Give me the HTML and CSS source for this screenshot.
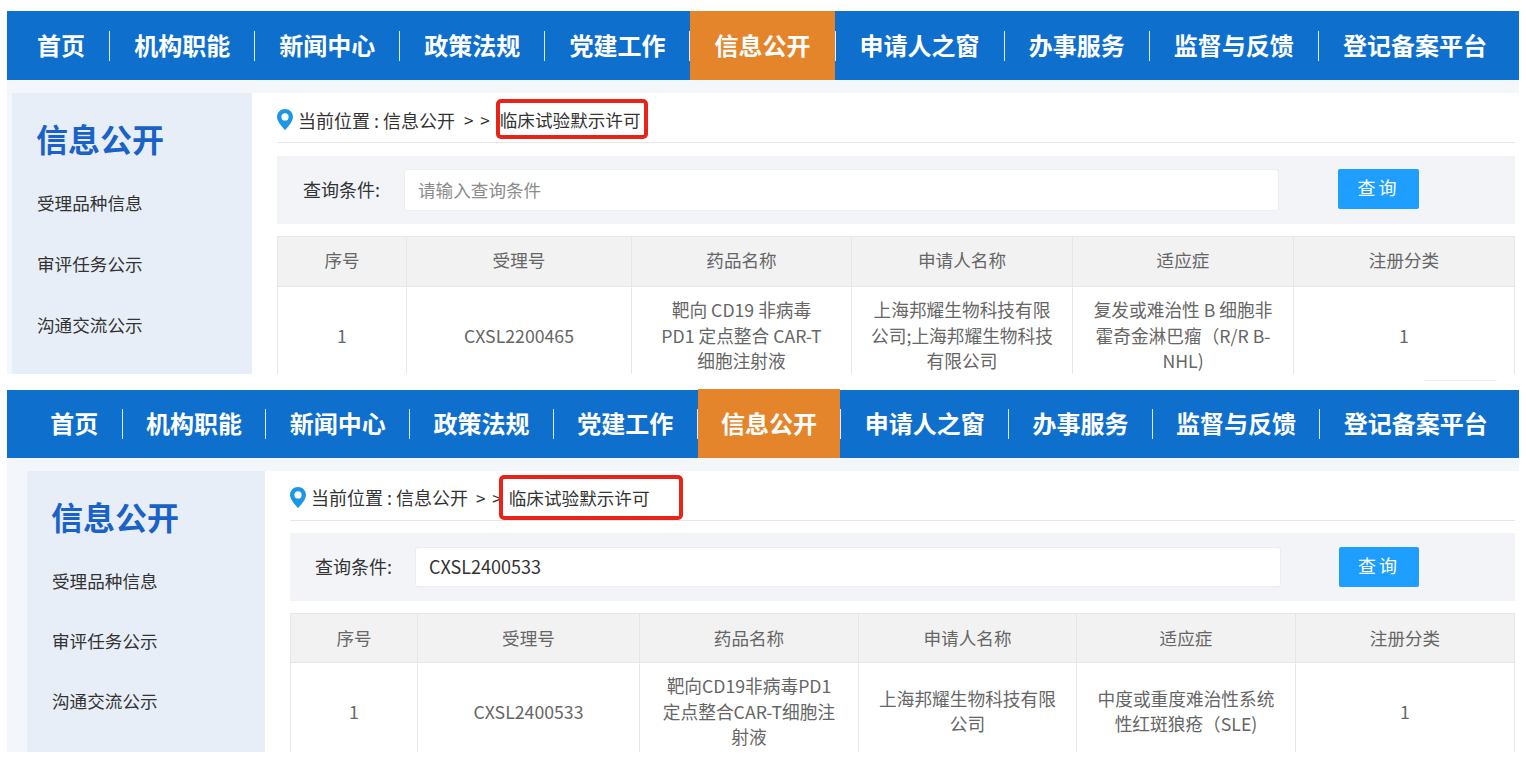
FILE: index.html
```html
<!DOCTYPE html>
<html lang="zh-CN">
<head>
<meta charset="utf-8">
<title>信息公开</title>
<link rel="stylesheet" href="styles.css">
</head>
<body>
<section class="panel panel-a">
  <nav class="nav">
    <a class="nav-item">首页</a><i class="sep"></i>
    <a class="nav-item">机构职能</a><i class="sep"></i>
    <a class="nav-item">新闻中心</a><i class="sep"></i>
    <a class="nav-item">政策法规</a><i class="sep"></i>
    <a class="nav-item">党建工作</a><i class="sep"></i>
    <a class="nav-item active">信息公开</a><i class="sep"></i>
    <a class="nav-item">申请人之窗</a><i class="sep"></i>
    <a class="nav-item">办事服务</a><i class="sep"></i>
    <a class="nav-item">监督与反馈</a><i class="sep"></i>
    <a class="nav-item">登记备案平台</a>
  </nav>
  <div class="content">
    <aside class="side">
      <h2 class="side-title">信息公开</h2>
      <ul class="side-list">
        <li>受理品种信息</li>
        <li>审评任务公示</li>
        <li>沟通交流公示</li>
      </ul>
    </aside>
    <main class="main">
      <div class="crumb">
        <svg class="pin" viewBox="0 0 16 21"><path fill-rule="evenodd" d="M8 0C3.6 0 0 3.5 0 7.9 0 13 8 21 8 21s8-8 8-13.1C16 3.5 12.4 0 8 0zm0 4.3a3.6 3.6 0 1 1 0 7.2 3.6 3.6 0 0 1 0-7.2z"/></svg>
        <span>当前位置 : 信息公开</span><span class="arrows">&gt; &gt;</span><span class="crumb-last">临床试验默示许可</span>
        <div class="mark"></div>
      </div>
      <form class="search">
        <label class="search-label">查询条件:</label>
        <input class="search-input" type="text" placeholder="请输入查询条件">
        <button class="search-btn" type="button">查询</button>
      </form>
      <table class="grid">
        <colgroup><col><col><col><col><col><col></colgroup>
        <thead><tr><th>序号</th><th>受理号</th><th>药品名称</th><th>申请人名称</th><th>适应症</th><th>注册分类</th></tr></thead>
        <tbody><tr><td>1</td><td>CXSL2200465</td><td>靶向 CD19 非病毒<br>PD1 定点整合 CAR-T<br>细胞注射液</td><td>上海邦耀生物科技有限公司;上海邦耀生物科技有限公司</td><td>复发或难治性 B 细胞非霍奇金淋巴瘤（R/R B-NHL)</td><td>1</td></tr></tbody>
      </table>
    </main>
  </div>
</section>
<div class="gap"><span class="gap-line"></span></div>
<section class="panel panel-b">
  <nav class="nav">
    <a class="nav-item">首页</a><i class="sep"></i>
    <a class="nav-item">机构职能</a><i class="sep"></i>
    <a class="nav-item">新闻中心</a><i class="sep"></i>
    <a class="nav-item">政策法规</a><i class="sep"></i>
    <a class="nav-item">党建工作</a><i class="sep"></i>
    <a class="nav-item active">信息公开</a><i class="sep"></i>
    <a class="nav-item">申请人之窗</a><i class="sep"></i>
    <a class="nav-item">办事服务</a><i class="sep"></i>
    <a class="nav-item">监督与反馈</a><i class="sep"></i>
    <a class="nav-item">登记备案平台</a>
  </nav>
  <div class="content">
    <aside class="side">
      <h2 class="side-title">信息公开</h2>
      <ul class="side-list">
        <li>受理品种信息</li>
        <li>审评任务公示</li>
        <li>沟通交流公示</li>
      </ul>
    </aside>
    <main class="main">
      <div class="crumb">
        <svg class="pin" viewBox="0 0 16 21"><path fill-rule="evenodd" d="M8 0C3.6 0 0 3.5 0 7.9 0 13 8 21 8 21s8-8 8-13.1C16 3.5 12.4 0 8 0zm0 4.3a3.6 3.6 0 1 1 0 7.2 3.6 3.6 0 0 1 0-7.2z"/></svg>
        <span>当前位置 : 信息公开</span><span class="arrows">&gt; &gt;</span><span class="crumb-last">临床试验默示许可</span>
        <div class="mark"></div>
      </div>
      <form class="search">
        <label class="search-label">查询条件:</label>
        <input class="search-input" type="text" value="CXSL2400533">
        <button class="search-btn" type="button">查询</button>
      </form>
      <table class="grid">
        <colgroup><col><col><col><col><col><col></colgroup>
        <thead><tr><th>序号</th><th>受理号</th><th>药品名称</th><th>申请人名称</th><th>适应症</th><th>注册分类</th></tr></thead>
        <tbody><tr><td>1</td><td>CXSL2400533</td><td>靶向CD19非病毒PD1<br>定点整合CAR-T细胞注<br>射液</td><td>上海邦耀生物科技有限公司</td><td>中度或重度难治性系统性红斑狼疮（SLE)</td><td>1</td></tr></tbody>
      </table>
    </main>
  </div>
</section>
</body>
</html>
```
FILE: styles.css
```css
* { box-sizing: border-box; }
html, body { margin: 0; padding: 0; }
body {
  background: #fff;
  padding: 11px 7px 0;
  height: 759px;
  overflow: hidden;
  font-family: "Noto Sans CJK SC", "Noto Sans", sans-serif;
  font-size: 18px;
  color: #333;
}
.panel {
  width: 1512px;
  display: flex;
  flex-direction: column;
  background: #f3f7fc;
}
.panel-a { height: 363px; --pad: 24.06px; }
.panel-b { height: 362px; --pad: 23.37px; }

/* nav */
.nav {
  display: flex;
  align-items: center;
  flex: none;
  background: #0f6fcd;
}
.panel-a .nav { height: 69px; padding-left: 6px; margin-bottom: 13px; }
.panel-b .nav { height: 68px; padding-left: 20px; margin-bottom: 13px; }
.nav-item {
  display: flex;
  align-items: center;
  height: 100%;
  padding: 0 var(--pad) 2px;
  font-size: 24px;
  font-weight: 700;
  line-height: 1;
  color: #fff;
  white-space: nowrap;
}
.nav-item.active { background: #e5852b; }
.panel-b .nav-item.active { height: 69px; margin-top: -1px; }
.sep {
  flex: none;
  width: 1px;
  height: 30px;
  background: #dfecf9;
}

/* gap between the two captures */
.gap {
  height: 16px;
  display: flex;
  justify-content: flex-end;
  padding: 6px 22px 0 0;
}
.gap-line {
  width: 73px;
  height: 1px;
  background: #f0f0f0;
}

/* content */
.content {
  flex: 1;
  min-height: 0;
  display: flex;
  overflow: hidden;
}
.panel-a .content { padding-left: 5px; }
.panel-b .content { padding-left: 20px; }
.side {
  flex: none;
  background: #e8eef7;
  padding: 25px 0 0 25px;
}
.panel-a .side { width: 240px; }
.panel-b .side { width: 238px; }
.side-title {
  margin: 0 0 0 -1px;
  font-size: 32px;
  line-height: 40px;
  font-weight: 700;
  color: #1a62c8;
}
.side-list { list-style: none; margin: 14px 0 0; padding: 0; }
.side-list li { color: #333; font-size: 17.6px; white-space: nowrap; }
.panel-a .side-list li { line-height: 61px; }
.panel-b .side-list { margin-top: 15px; }
.panel-b .side-list li { line-height: 60px; }

/* main column */
.main {
  flex: 1;
  min-width: 0;
  background: #fff;
  padding: 0 4px 0 25px;
}
.crumb {
  position: relative;
  display: flex;
  align-items: center;
  border-bottom: 1px solid #e6e6e6;
  font-size: 18px;
  color: #333;
  white-space: nowrap;
}
.panel-a .crumb { height: 50px; padding-top: 4px; }
.panel-b .crumb { height: 50px; padding-top: 3px; }
.pin { width: 16px; height: 21px; fill: #1e96e8; flex: none; margin-right: 5px; }
.arrows { margin: 0 10px 0 9px; font-size: 17px; word-spacing: 3px; }
.panel-b .arrows { margin: 0 7px 0 8px; }
.crumb-last { font-size: 17.6px; }
.mark {
  position: absolute;
  border: 4px solid #e8231a;
  border-radius: 5px;
}
.panel-a .mark { left: 219px; top: 6px; width: 152px; height: 40px; }
.panel-b .mark { left: 209px; top: 4px; width: 184px; height: 45px; }

/* search */
.search {
  display: flex;
  align-items: center;
  height: 68px;
  background: #f2f4f8;
  white-space: nowrap;
}
.panel-a .search { margin-top: 13px; padding-left: 26px; }
.panel-b .search { margin-top: 12px; padding-left: 25px; }
.search-label { flex: none; color: #333; font-size: 18px; padding-bottom: 2px; }
.panel-a .search-label { width: 101px; }
.panel-b .search-label { width: 100px; }
.search-input {
  flex: none;
  border: 1px solid #ebedf0;
  border-radius: 3px;
  background: #fff;
  padding: 0 13px 2px;
  font: inherit;
  font-size: 18px;
  color: #333;
  outline: none;
}
.search-input::placeholder { color: #8c8c8c; opacity: 1; }
.panel-a .search-input { width: 875px; height: 42px; margin-right: 59px; font-size: 17.6px; }
.panel-b .search-input { width: 866px; height: 40px; margin-right: 58px; }
.search-btn {
  flex: none;
  height: 40px;
  border: 0;
  border-radius: 2px;
  background: #1e9fff;
  color: #fff;
  font: inherit;
  font-size: 18px;
  letter-spacing: 3px;
  padding: 0 0 3px;
}
.panel-a .search-btn { width: 81px; margin-top: -3px; }
.panel-b .search-btn { width: 80px; margin-top: -1px; }

/* table */
.grid {
  table-layout: fixed;
  border-collapse: collapse;
  color: #666;
  font-size: 17.7px;
  line-height: 25.5px;
  text-align: center;
}
.panel-a .grid { width: 1237px; margin-top: 12px; }
.panel-b .grid { width: 1224px; margin-top: 12px; }
.grid th {
  background: #f2f2f2;
  font-weight: 400;
  font-size: 17.6px;
  border: 1px solid #e6e6e6;
}
.panel-a .grid th { height: 50px; padding: 0 0 4px; }
.panel-b .grid th { height: 49px; padding: 0; }
.grid td {
  border: 1px solid #e6e6e6;
  padding: 10px 15px;
  vertical-align: middle;
  word-break: break-word;
}
.panel-a .grid td { padding-bottom: 14px; }
.panel-a col:nth-child(1) { width: 129px; }
.panel-a col:nth-child(2) { width: 225px; }
.panel-a col:nth-child(3) { width: 220px; }
.panel-a col:nth-child(4) { width: 221px; }
.panel-a col:nth-child(5) { width: 221px; }
.panel-a col:nth-child(6) { width: 221px; }
.panel-b col:nth-child(1) { width: 127px; }
.panel-b col:nth-child(2) { width: 222px; }
.panel-b col:nth-child(3) { width: 219px; }
.panel-b col:nth-child(4) { width: 218px; }
.panel-b col:nth-child(5) { width: 219px; }
.panel-b col:nth-child(6) { width: 219px; }
```
